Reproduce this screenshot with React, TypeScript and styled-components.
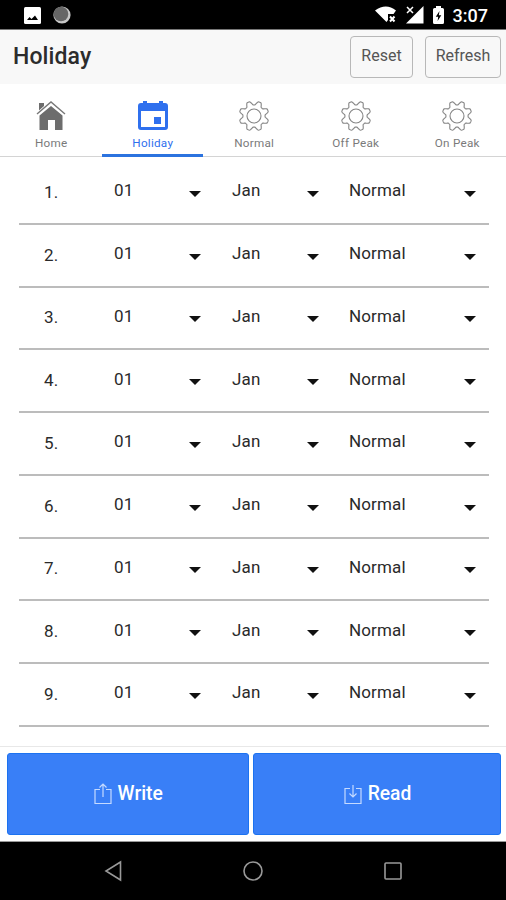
import React from "react";
import styled, { createGlobalStyle } from "styled-components";

const Global = createGlobalStyle`
  * { box-sizing: border-box; }
  body { margin: 0; background: #fff; }
`;

const Screen = styled.div`
  width: 506px;
  height: 900px;
  display: flex;
  flex-direction: column;
  overflow: hidden;
  background: #fff;
  color: #2a2a2a;
  font-family: Roboto, "Liberation Sans", sans-serif;
  svg { display: block; flex: none; }
`;

const StatusBar = styled.div`
  height: 30px;
  flex: none;
  display: flex;
  align-items: center;
  padding: 1px 18px 0 24px;
  background: #000;
  border-bottom: 1px solid #777;
`;

const StatusGroup = styled.div<{ $gap: number }>`
  display: flex;
  align-items: center;
  gap: ${(p) => p.$gap}px;
`;

const Spacer = styled.div`
  flex: 1;
`;

const Clock = styled.span`
  color: #fff;
  font-size: 18px;
  font-weight: 500;
  line-height: 20px;
  padding-top: 1px;
`;

const Header = styled.header`
  height: 54px;
  flex: none;
  display: flex;
  align-items: center;
  gap: 12px;
  padding: 0 5px 0 13px;
  background: #f8f8f8;
`;

const Title = styled.h1`
  flex: 1;
  margin: 0;
  padding-bottom: 1px;
  font-size: 23px;
  font-weight: 500;
  letter-spacing: 0.1px;
  color: #2c2c2c;
`;

const HeaderButton = styled.button<{ $width: number }>`
  width: ${(p) => p.$width}px;
  height: 42px;
  padding: 0 0 4px;
  border: 1px solid #b8b8b8;
  border-radius: 4px;
  background: #f8f8f8;
  color: #555;
  font: 400 16px Roboto, sans-serif;
`;

const Tabs = styled.nav`
  height: 73px;
  flex: none;
  display: grid;
  grid-template-columns: repeat(5, 101.5px);
  box-shadow: inset 0 -1px #d4d4d4;
`;

const Tab = styled.div<{ $active?: boolean }>`
  display: flex;
  flex-direction: column;
  align-items: center;
  padding: 16px 0 0 1px;
  border-bottom: 3px solid ${(p) => (p.$active ? "#2b73df" : "transparent")};
  color: ${(p) => (p.$active ? "#2f70ee" : "#7a7a7a")};
`;

const TabLabel = styled.span`
  margin-top: 4px;
  font-size: 11.7px;
  line-height: 14px;
  letter-spacing: 0.25px;
`;

const List = styled.main`
  flex: 1;
  padding: 5px 17px 0 19px;
`;

const Row = styled.div`
  height: 62.75px;
  display: grid;
  grid-template-columns: 95px 118px 117px 1fr;
  align-items: center;
  border-bottom: 2px solid #bcbcbc;
  font-size: 17px;
  letter-spacing: 0.15px;
`;

const Index = styled.span`
  padding: 0 0 1px 25px;
`;

const Select = styled.div<{ $end: number }>`
  display: flex;
  align-items: center;
  justify-content: space-between;
  padding: 0 ${(p) => p.$end}px 4px 0;
`;

const Caret = styled.i`
  margin-top: 7px;
  border: 6px solid transparent;
  border-top-color: #111;
  border-bottom: 0;
`;

const Actions = styled.footer`
  height: 96px;
  flex: none;
  display: grid;
  grid-template-columns: 241.5px 248px;
  gap: 4.5px;
  padding: 6px 5px 6px 7px;
  border-top: 1px solid #e8e8e8;
  border-bottom: 1px solid #999;
`;

const ActionButton = styled.button`
  display: flex;
  align-items: center;
  justify-content: center;
  gap: 6px;
  padding: 0 0 1px 1px;
  border: 1px solid #1c72f0;
  border-radius: 3px;
  background: #397ff7;
  color: #fff;
  font: 500 19.3px Roboto, sans-serif;
`;

const NavBar = styled.div`
  height: 58px;
  flex: none;
  display: flex;
  align-items: center;
  justify-content: space-between;
  padding: 0 103px;
  background: #000;
`;

const gearPath = (() => {
  const points: string[] = [];
  for (let i = 0; i < 160; i++) {
    const a = (i / 160) * Math.PI * 2;
    const wave = Math.max(-1, Math.min(1, 1.4 * Math.cos(8 * (a - Math.PI / 8))));
    const r = 13 + 1.9 * wave;
    points.push(`${(15 + r * Math.cos(a)).toFixed(2)} ${(15 + r * Math.sin(a)).toFixed(2)}`);
  }
  return `M${points.join("L")}Z`;
})();

const Gear = () => (
  <svg width="32" height="32" viewBox="-1 -1 32 32" fill="none" stroke="#858585" strokeWidth="1.1">
    <path d={gearPath} />
    <circle cx="15" cy="15" r="7" />
  </svg>
);

const Home = () => (
  <svg width="32" height="32" viewBox="0 0 32 32" fill="#6d6d6d">
    <path d="M4 3h5v5L4 12ZM4.5 15.5 16 6l11.5 9.5V30H20V20h-7v10H4.5Z" />
    <path d="m2.5 13.5 13.5-12 13.5 12" fill="none" stroke="#fff" strokeWidth="2.5" />
    <path d="m2 14 14-12 14 12" fill="none" stroke="#777" strokeWidth="1.4" />
  </svg>
);

const Calendar = () => (
  <svg width="32" height="32" viewBox="0 0 32 32" fill="currentColor">
    <path fillRule="evenodd" d="M6 1h4v2h12V1h4v2h2q3 0 3 3v21q0 3-3 3H4q-3 0-3-3V6q0-3 3-3h2ZM4 11v16h24V11Z" />
    <path d="M17 17h7v7h-7Z" />
  </svg>
);

const PhotoIcon = () => (
  <svg width="17" height="17" viewBox="0 0 17 17">
    <rect width="17" height="17" rx="1.5" fill="#fff" />
    <path d="M3 13 5.5 10l2 2L11 8.5l3 4.5Z" fill="#000" />
  </svg>
);

const MoonIcon = () => (
  <svg width="18" height="18" viewBox="0 0 18 18">
    <circle cx="9" cy="9" r="8.6" fill="#c8c8c8" />
    <circle cx="8" cy="8" r="7.3" fill="#666" />
  </svg>
);

const WifiIcon = () => (
  <svg width="22" height="18" viewBox="0 0 22 18">
    <path d="M0 4.5Q11-3.5 21 4.5L18.5 8H13v6l-1.5 2Z" fill="#fff" />
    <path d="m15 10.5 4.5 5m0-5-4.5 5" stroke="#fff" strokeWidth="2" />
  </svg>
);

const SignalIcon = () => (
  <svg width="18" height="18" viewBox="0 0 18 18">
    <path d="M17.5 0v17.5H0L8 9.5l2-2Z" fill="#fff" />
    <path d="m1 1 6 6m0-6L1 7" stroke="#fff" strokeWidth="1.5" />
  </svg>
);

const BatteryIcon = () => (
  <svg width="11" height="18" viewBox="0 0 11 18">
    <path d="M3 0h5v2h1.5Q11 2 11 3.5v13Q11 18 9.5 18h-8Q0 18 0 16.5v-13Q0 2 1.5 2H3Z" fill="#fff" />
    <path d="M6.5 5 2.8 10.7h2.4L4.6 15l3.7-5.7H5.8Z" fill="#000" />
  </svg>
);

const TransferIcon = ({ down }: { down?: boolean }) => (
  <svg width="18" height="22" viewBox="0 0 18 22" fill="none" stroke="#c5daff" strokeWidth="1.2">
    <path d={down ? "M6 5.5H1v15h16v-15h-5M9 2v12M5.5 10.5 9 14l3.5-3.5" : "M6 6.5H1v14h16v-14h-5M9 14V1M5.5 4.5 9 1l3.5 3.5"} />
  </svg>
);

const tabs = [
  { label: "Home", icon: <Home /> },
  { label: "Holiday", icon: <Calendar />, active: true },
  { label: "Normal", icon: <Gear /> },
  { label: "Off Peak", icon: <Gear /> },
  { label: "On Peak", icon: <Gear /> },
];

export default function App() {
  return (
    <Screen>
      <Global />
      <StatusBar>
        <StatusGroup $gap={12}>
          <PhotoIcon />
          <MoonIcon />
        </StatusGroup>
        <Spacer />
        <StatusGroup $gap={9}>
          <WifiIcon />
          <SignalIcon />
          <BatteryIcon />
          <Clock>3:07</Clock>
        </StatusGroup>
      </StatusBar>
      <Header>
        <Title>Holiday</Title>
        <HeaderButton $width={63}>Reset</HeaderButton>
        <HeaderButton $width={76}>Refresh</HeaderButton>
      </Header>
      <Tabs>
        {tabs.map((t) => (
          <Tab key={t.label} $active={t.active}>
            {t.icon}
            <TabLabel>{t.label}</TabLabel>
          </Tab>
        ))}
      </Tabs>
      <List>
        {Array.from({ length: 9 }, (_, i) => (
          <Row key={i}>
            <Index>{i + 1}.</Index>
            <Select $end={31}>01<Caret /></Select>
            <Select $end={30}>Jan<Caret /></Select>
            <Select $end={13}>Normal<Caret /></Select>
          </Row>
        ))}
      </List>
      <Actions>
        <ActionButton><TransferIcon />Write</ActionButton>
        <ActionButton><TransferIcon down />Read</ActionButton>
      </Actions>
      <NavBar>
        <svg width="20" height="22" viewBox="0 0 20 22" fill="none" stroke="#999" strokeWidth="1.6">
          <path d="M17.5 2v18L3 11Z" />
        </svg>
        <svg width="22" height="22" viewBox="0 0 22 22" fill="none" stroke="#999" strokeWidth="1.6">
          <circle cx="11" cy="11" r="9" />
        </svg>
        <svg width="20" height="20" viewBox="0 0 20 20" fill="none" stroke="#999" strokeWidth="1.6">
          <rect x="2" y="2" width="16" height="16" rx="1" />
        </svg>
      </NavBar>
    </Screen>
  );
}
